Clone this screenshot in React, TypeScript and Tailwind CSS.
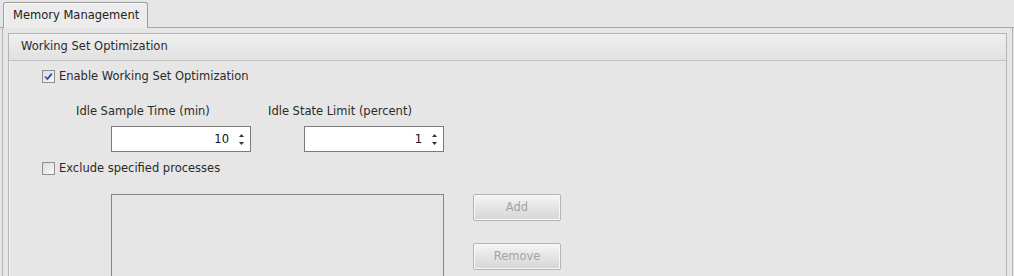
function Spinner({ value }: { value: string }) {
  return (
    <div className="flex h-[26px] w-[140px] items-center bg-white border border-[#7a7a7a]">
      <span className="flex-1 text-right pr-[5px] pt-[1px] text-[#111]">{value}</span>
      <div className="flex w-[14px] flex-col items-center mr-[2px]">
        <svg width="7" height="5" viewBox="0 0 7 5" className="mb-[3px]">
          <path d="M3.5 1 L6 4 L1 4 Z" fill="#333" />
        </svg>
        <svg width="7" height="5" viewBox="0 0 7 5">
          <path d="M1 1 L6 1 L3.5 4 Z" fill="#333" />
        </svg>
      </div>
    </div>
  );
}

function Check({ checked, label }: { checked: boolean; label: string }) {
  return (
    <label className="flex items-center gap-[4px] h-[14px]">
      <span className="flex h-[13px] w-[13px] items-center justify-center border border-[#8e8f8f] bg-gradient-to-br from-[#dcdcdc] to-[#f8f8f8]">
        {checked && (
          <svg width="9" height="9" viewBox="0 0 9 9">
            <path d="M1.2 4.6 L3.5 7 L7.8 1.6" stroke="#2b4f9a" strokeWidth="1.8" fill="none" />
          </svg>
        )}
      </span>
      <span className="pt-[1px]">{label}</span>
    </label>
  );
}

function DisabledButton({ label }: { label: string }) {
  return (
    <button className="h-[27px] w-[88px] border border-[#b4b4b4] rounded-[2px] bg-gradient-to-b from-[#f6f6f6] via-[#e4e4e4] to-[#d6d6d6] text-[#a3a3a3] shadow-[inset_0_0_0_1px_#f8f8f8]">
      {label}
    </button>
  );
}

export default function App() {
  return (
    <div
      className="w-[1014px] h-[276px] overflow-hidden bg-[#e6e6e6] text-[11.5px] text-[#2a2a2a] flex flex-col"
      style={{ fontFamily: '"DejaVu Sans", Verdana, sans-serif' }}
    >
      {/* tab strip */}
      <div className="h-[28px] flex items-end pl-[3px] border-b border-[#a7a7a7] shrink-0">
        <div className="h-[26px] w-[145px] flex items-center pl-[9px] border border-b-0 border-[#9c9c9c] rounded-t-[3px] bg-[#ececec] text-[#222] mb-[-1px] shadow-[inset_1px_1px_0_#f8f8f8]">
          Memory Management
        </div>
      </div>

      {/* tab page */}
      <div className="flex-1 border-l border-r border-[#b3b3b3] ml-[2px] mr-[1px] pl-[5px] pr-[5px] pt-[5px]">
        <div className="h-full border border-[#b5b5b5] shadow-[inset_1px_1px_0_#f6f6f6]">
          <div className="h-[27px] flex items-center pl-[12px] bg-gradient-to-b from-[#efefef] to-[#e1e1e1] border-b border-[#c2c2c2]">
            Working Set Optimization
          </div>

          <div className="pl-[33px] pt-[8px]">
            <Check checked label="Enable Working Set Optimization" />

            <div className="flex pl-[34px] mt-[20px]">
              <div className="flex flex-col w-[192px]">
                <span className="leading-[14px] pt-[1px]">Idle Sample Time (min)</span>
                <div className="ml-[35px] mt-[8px]">
                  <Spinner value="10" />
                </div>
              </div>
              <div className="flex flex-col">
                <span className="leading-[14px] pt-[1px]">Idle State Limit (percent)</span>
                <div className="ml-[36px] mt-[8px]">
                  <Spinner value="1" />
                </div>
              </div>
            </div>

            <div className="mt-[9px]">
              <Check checked={false} label="Exclude specified processes" />
            </div>

            <div className="flex mt-[19px] pl-[69px]">
              <div className="w-[333px] h-[120px] border border-[#858585] bg-[#e6e6e6]" />
              <div className="flex flex-col gap-[22px] ml-[29px]">
                <DisabledButton label="Add" />
                <DisabledButton label="Remove" />
              </div>
            </div>
          </div>
        </div>
      </div>
    </div>
  );
}
